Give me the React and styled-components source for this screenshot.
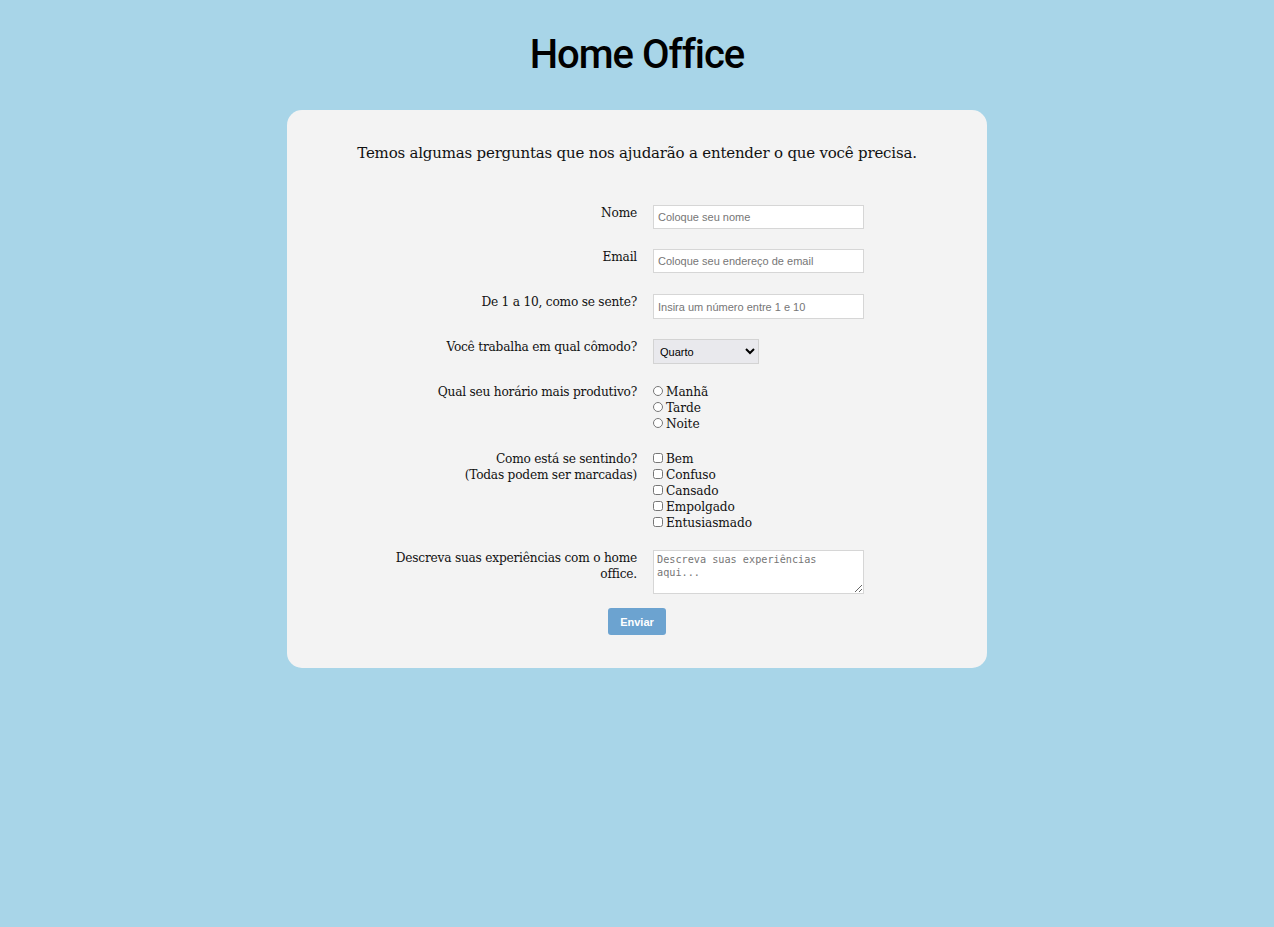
import React from "react";
import styled, { createGlobalStyle } from "styled-components";

const GlobalStyle = createGlobalStyle`
  html, body { margin: 0; padding: 0; }
  body {
    background: #a8d5e8;
    font-family: "DejaVu Serif", "Liberation Serif", serif;
    color: #111;
    min-height: 927px;
  }
`;

const Page = styled.main`
  display: flex;
  flex-direction: column;
  align-items: center;
  padding: 31px 0 40px;
`;

const Title = styled.h1`
  margin: 0 0 31px;
  font-family: Roboto, "Liberation Sans", sans-serif;
  font-weight: 500;
  font-size: 40px;
  letter-spacing: -1px;
  line-height: 48px;
  color: #000;
`;

const Card = styled.section`
  width: 700px;
  box-sizing: border-box;
  background: #f3f3f3;
  border-radius: 15px;
  padding: 31px 0 33px;
`;

const Intro = styled.p`
  margin: 0 0 40px;
  text-align: center;
  font-size: 15px;
  letter-spacing: -0.2px;
  line-height: 24px;
  color: #111;
`;

const Form = styled.form`
  display: flex;
  flex-direction: column;
  align-items: stretch;
`;

const Row = styled.div`
  display: grid;
  grid-template-columns: 350px 350px;
  margin-bottom: ${(p) => p.$gap ?? 20}px;
`;

const Label = styled.label`
  text-align: right;
  font-size: 12.2px;
  letter-spacing: -0.22px;
  line-height: 16px;
  color: #111;
  padding-left: 80px;
`;

const Field = styled.div`
  padding-left: 16px;
  display: flex;
  flex-direction: column;
  align-items: flex-start;
`;

const TextInput = styled.input`
  box-sizing: border-box;
  width: 211px;
  height: ${(p) => p.$h ?? 24}px;
  margin: 0;
  border: 1px solid #d6d6d6;
  background: #fff;
  padding: 0 4px;
  font-family: "Liberation Sans", Arial, sans-serif;
  font-size: 11px;
  color: #222;
  outline: none;
  &::placeholder { color: #767676; }
`;

const Select = styled.select`
  box-sizing: border-box;
  width: 106px;
  height: 25px;
  margin: 0;
  border: 1px solid #d3d3d3;
  background: #e9e9ed;
  padding: 0 2px;
  font-family: "Liberation Sans", Arial, sans-serif;
  font-size: 11px;
  color: #000;
`;

const Option = styled.label`
  display: flex;
  align-items: center;
  font-size: 12.2px;
  letter-spacing: -0.1px;
  line-height: 16px;
  color: #111;
`;

const Check = styled.input`
  width: 10px;
  height: 10px;
  margin: -3px 3px 0 0;
`;

const TextArea = styled.textarea`
  box-sizing: border-box;
  width: 211px;
  height: 44px;
  margin: 0;
  border: 1px solid #d6d6d6;
  background: #fff;
  padding: 2px 3px;
  font-family: "DejaVu Sans Mono", "Liberation Mono", monospace;
  font-size: 10.2px;
  line-height: 13px;
  outline: none;
  &::placeholder { color: #767676; }
`;

const Actions = styled.div`
  display: flex;
  justify-content: center;
  margin-top: -6px;
`;

const Button = styled.button`
  width: 58px;
  height: 27px;
  border: none;
  border-radius: 3px;
  background: #6ca3d0;
  color: #fff;
  font-family: "Liberation Sans", Arial, sans-serif;
  font-weight: 700;
  font-size: 11px;
  cursor: pointer;
`;

export default function App() {
  return (
    <>
      <GlobalStyle />
      <Page>
        <Title>Home Office</Title>
        <Card>
          <Intro>Temos algumas perguntas que nos ajudarão a entender o que você precisa.</Intro>
          <Form onSubmit={(e) => e.preventDefault()}>
            <Row>
              <Label htmlFor="nome">Nome</Label>
              <Field>
                <TextInput id="nome" type="text" placeholder="Coloque seu nome" />
              </Field>
            </Row>
            <Row $gap={21}>
              <Label htmlFor="email">Email</Label>
              <Field>
                <TextInput id="email" type="email" placeholder="Coloque seu endereço de email" />
              </Field>
            </Row>
            <Row>
              <Label htmlFor="num">De 1 a 10, como se sente?</Label>
              <Field>
                <TextInput id="num" type="number" $h={25} placeholder="Insira um número entre 1 e 10" />
              </Field>
            </Row>
            <Row>
              <Label htmlFor="comodo">Você trabalha em qual cômodo?</Label>
              <Field>
                <Select id="comodo" defaultValue="quarto">
                  <option value="quarto">Quarto</option>
                  <option value="sala">Sala</option>
                  <option value="cozinha">Cozinha</option>
                </Select>
              </Field>
            </Row>
            <Row $gap={19}>
              <Label>Qual seu horário mais produtivo?</Label>
              <Field>
                <Option><Check type="radio" name="horario" />Manhã</Option>
                <Option><Check type="radio" name="horario" />Tarde</Option>
                <Option><Check type="radio" name="horario" />Noite</Option>
              </Field>
            </Row>
            <Row $gap={19}>
              <Label>Como está se sentindo? <br />(Todas podem ser marcadas)</Label>
              <Field>
                <Option><Check type="checkbox" />Bem</Option>
                <Option><Check type="checkbox" />Confuso</Option>
                <Option><Check type="checkbox" />Cansado</Option>
                <Option><Check type="checkbox" />Empolgado</Option>
                <Option><Check type="checkbox" />Entusiasmado</Option>
              </Field>
            </Row>
            <Row>
              <Label htmlFor="exp">Descreva suas experiências com o home <br />office.</Label>
              <Field>
                <TextArea id="exp" placeholder="Descreva suas experiências aqui..." />
              </Field>
            </Row>
            <Actions>
              <Button type="submit">Enviar</Button>
            </Actions>
          </Form>
        </Card>
      </Page>
    </>
  );
}
